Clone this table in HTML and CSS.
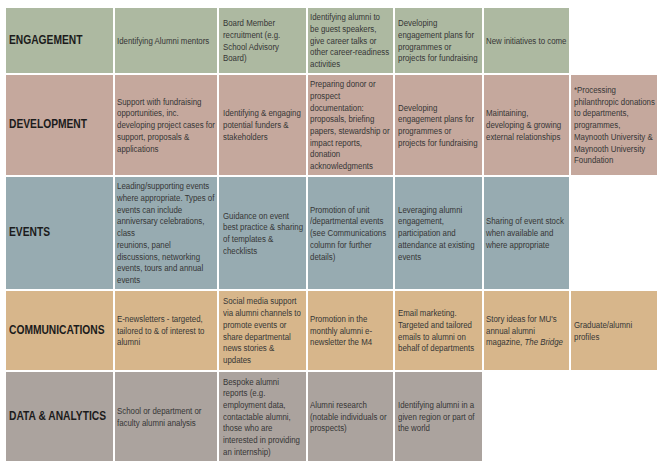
FILE: index.html
```html
<!DOCTYPE html>
<html>
<head>
<meta charset="utf-8">
<link rel="stylesheet" href="styles.css">
</head>
<body>
<div class="grid">
  <div class="cell head eng"><span class="txt">ENGAGEMENT</span></div>
  <div class="cell eng"><span class="txt">Identifying Alumni mentors</span></div>
  <div class="cell eng"><span class="txt">Board Member<br>recruitment (e.g.<br>School Advisory<br>Board)</span></div>
  <div class="cell eng"><span class="txt">Identifying alumni to<br>be guest speakers,<br>give career talks or<br>other career-readiness<br>activities</span></div>
  <div class="cell eng"><span class="txt">Developing<br>engagement plans for<br>programmes or<br>projects for fundraising</span></div>
  <div class="cell eng"><span class="txt">New initiatives to come</span></div>
  <div class="cell empty"></div>

  <div class="cell head dev"><span class="txt">DEVELOPMENT</span></div>
  <div class="cell dev"><span class="txt">Support with fundraising<br>opportunities, inc.<br>developing project cases for<br>support, proposals &amp;<br>applications</span></div>
  <div class="cell dev"><span class="txt">Identifying &amp; engaging<br>potential funders &amp;<br>stakeholders</span></div>
  <div class="cell dev"><span class="txt">Preparing donor or<br>prospect<br>documentation:<br>proposals, briefing<br>papers, stewardship or<br>impact reports,<br>donation<br>acknowledgments</span></div>
  <div class="cell dev"><span class="txt">Developing<br>engagement plans for<br>programmes or<br>projects for fundraising</span></div>
  <div class="cell dev"><span class="txt">Maintaining,<br>developing &amp; growing<br>external relationships</span></div>
  <div class="cell dev"><span class="txt">*Processing<br>philanthropic donations<br>to departments,<br>programmes,<br>Maynooth University &amp;<br>Maynooth University<br>Foundation</span></div>

  <div class="cell head evt"><span class="txt">EVENTS</span></div>
  <div class="cell evt"><span class="txt">Leading/supporting events<br>where appropriate. Types of<br>events can include<br>anniversary celebrations,<br>class<br>reunions, panel<br>discussions, networking<br>events, tours and annual<br>events</span></div>
  <div class="cell evt"><span class="txt">Guidance on event<br>best practice &amp; sharing<br>of templates &amp;<br>checklists</span></div>
  <div class="cell evt"><span class="txt">Promotion of unit<br>/departmental events<br>(see Communications<br>column for further<br>details)</span></div>
  <div class="cell evt"><span class="txt">Leveraging alumni<br>engagement,<br>participation and<br>attendance at existing<br>events</span></div>
  <div class="cell evt"><span class="txt">Sharing of event stock<br>when available and<br>where appropriate</span></div>
  <div class="cell empty"></div>

  <div class="cell head com"><span class="txt">COMMUNICATIONS</span></div>
  <div class="cell com"><span class="txt">E-newsletters - targeted,<br>tailored to &amp; of interest to<br>alumni</span></div>
  <div class="cell com"><span class="txt">Social media support<br>via alumni channels to<br>promote events or<br>share departmental<br>news stories &amp;<br>updates</span></div>
  <div class="cell com"><span class="txt">Promotion in the<br>monthly alumni e-<br>newsletter the M4</span></div>
  <div class="cell com"><span class="txt">Email marketing.<br>Targeted and tailored<br>emails to alumni on<br>behalf of departments</span></div>
  <div class="cell com"><span class="txt">Story ideas for MU's<br>annual alumni<br>magazine, <i>The Bridge</i></span></div>
  <div class="cell com"><span class="txt">Graduate/alumni<br>profiles</span></div>

  <div class="cell head dat"><span class="txt">DATA &amp; ANALYTICS</span></div>
  <div class="cell dat"><span class="txt">School or department or<br>faculty alumni analysis</span></div>
  <div class="cell dat"><span class="txt">Bespoke alumni<br>reports (e.g.<br>employment data,<br>contactable alumni,<br>those who are<br>interested in providing<br>an internship)</span></div>
  <div class="cell dat"><span class="txt">Alumni research<br>(notable individuals or<br>prospects)</span></div>
  <div class="cell dat"><span class="txt">Identifying alumni in a<br>given region or part of<br>the world</span></div>
  <div class="cell empty"></div>
  <div class="cell empty"></div>
</div>
</body>
</html>
```

FILE: styles.css
```css
html, body {
  margin: 0;
  padding: 0;
  background: #ffffff;
}

body {
  padding: 8px 0 0 6px;
  font-family: "Liberation Sans", Arial, sans-serif;
  color: #363636;
}

.grid {
  display: grid;
  grid-template-columns: 107px 102px 87px 85px 87px 85px 86px;
  grid-template-rows: 65px 100px 112px 79px 89px;
  gap: 2px;
}

.cell {
  display: flex;
  align-items: center;
  padding: 0 0 0 2px;
  font-size: 9.6px;
  line-height: 11.7px;
  overflow: hidden;
}

.grid > .cell:nth-child(7n+3) {
  padding-left: 3.5px;
}

.grid > .cell:nth-child(7n+5),
.grid > .cell:nth-child(7n) {
  padding-left: 3px;
}

.txt {
  flex: none;
  display: block;
  width: calc(100% / 0.82);
  white-space: nowrap;
  transform: scaleX(0.82);
  transform-origin: 0 50%;
}

.cell.head {
  padding-left: 3px;
  font-size: 12.5px;
  font-weight: bold;
  color: #1b1b1b;
}

.eng { background: #adb9a1; }
.dev { background: #c5a89d; }
.evt { background: #97abb1; }
.com { background: #d7b68b; }
.dat { background: #aba39e; }
.empty { background: transparent; }
```
